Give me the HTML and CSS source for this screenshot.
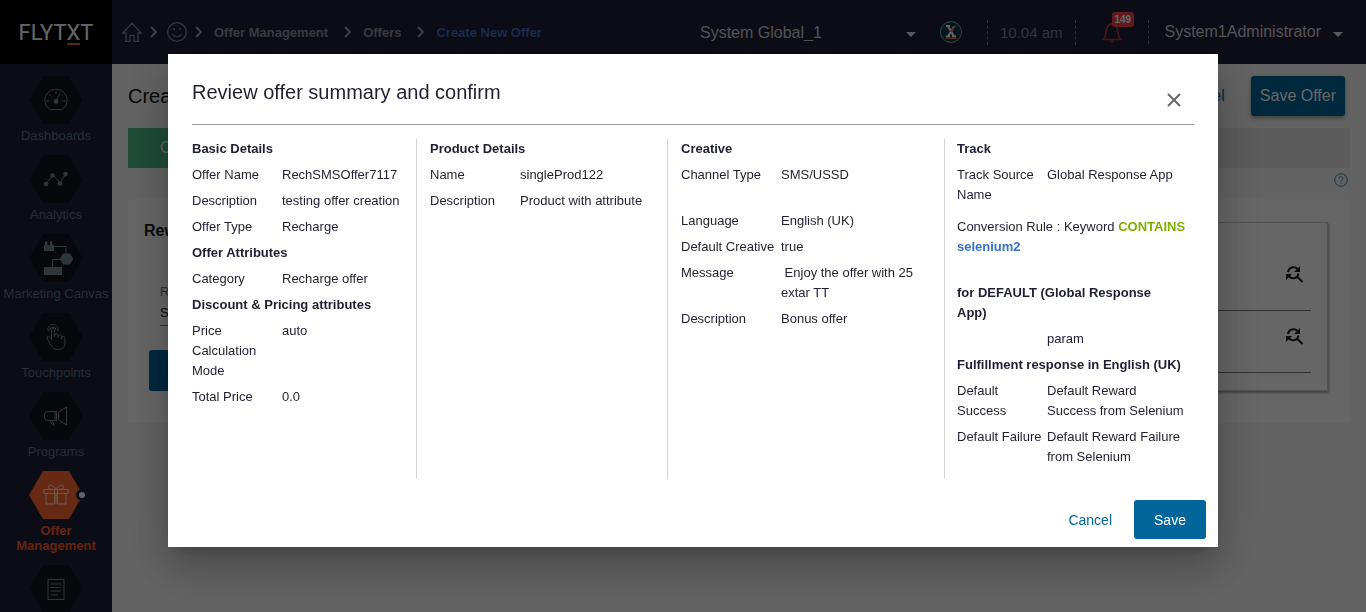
FILE: index.html
```html
<!DOCTYPE html>
<html lang="en">
<head>
<meta charset="utf-8">
<title>Create New Offer</title>
<link rel="stylesheet" href="styles.css">
</head>
<body>
<div class="app">
  <aside class="sidebar">
    <div class="logo"><span>FLYT<span class="logo-x">X</span>T</span></div>
    <nav class="menu">
      <a class="item" href="#">
        <span class="hex"><svg class="glyph" viewBox="0 0 26 26"><path d="M6.500 22.500A11.200 11.200 0 1 1 19.500 22.500Z"/><path d="M13 4v3M3.500 14h3M19.500 14h3M6.500 7.500l2 2M13.500 13l3.500-6.500M19.500 7.500l-1 1"/><circle class="solid" cx="13" cy="14.500" r="2.400"/></svg></span>
        <span class="label">Dashboards</span>
      </a>
      <a class="item" href="#">
        <span class="hex"><svg class="glyph" viewBox="0 0 26 26"><path d="M3 18l7-9 7 8 6-9.500"/><g class="solid"><circle cx="3" cy="18" r="2.300"/><circle cx="9.500" cy="9.500" r="2.300"/><circle cx="17" cy="17.500" r="2.300"/><circle cx="22.500" cy="8" r="2.300"/></g></svg></span>
        <span class="label">Analytics</span>
      </a>
      <a class="item" href="#">
        <span class="hex"><svg class="glyph wide" viewBox="0 0 36 36"><path d="M14 6.500h14v7M22 19.500M28 19.500H14.500v8"/><g class="solid"><path d="M6 5h10v6H6zM7 1.500h2.500v4H7zM12 1.500h2.500v4H12zM6 27h18v8H6zM25 13.500h7l3.200 5.500-3.200 5.500h-7L21.800 19z"/></g></svg></span>
        <span class="label">Marketing Canvas</span>
      </a>
      <a class="item" href="#">
        <span class="hex"><svg class="glyph" viewBox="0 0 26 26"><path d="M8.500 16V5.500a1.500 1.500 0 0 1 3 0V13M11.500 11.500a1.500 1.500 0 0 1 3.500 0V14M15 12.500a1.500 1.500 0 0 1 3.500 0V15M18.500 14a1.500 1.500 0 0 1 3.500 0v5c0 4-3 6.500-7 6.500-5 0-6.500-3-9-7.500l-2-4c-.5-2 1.500-2.500 3-.5l2 2.500"/><path d="M5.500 7.500a5 5 0 1 1 9 0M7 6a3 3 0 1 1 6 0"/></svg></span>
        <span class="label">Touchpoints</span>
      </a>
      <a class="item" href="#">
        <span class="hex"><svg class="glyph" viewBox="0 0 26 26"><path d="M12 8.500v9H4.500c-4 0-4-9 0-9zM12 8.500h1.500v9H12M15.500 9l8-5v18l-8-5zM7 17.500h2.500l1.500 5.500M7 17.500l2 4"/></svg></span>
        <span class="label">Programs</span>
      </a>
      <a class="item active" href="#">
        <span class="hex"><svg class="glyph" viewBox="0 0 26 26"><path d="M1 7.500h24v4H1zM3 11.500h9v10.500H3zM14 11.500h9v10.500h-9zM11.500 7.500v14.500M14.500 7.500v14.500M13 7.500C10 2 5 2 5.500 5.500c.3 2 3 2 7.500 2M13 7.500c3-5.500 8-5.500 7.500-2-.3 2-3 2-7.500 2"/></svg></span>
        <span class="dot"></span>
        <span class="label">Offer Management</span>
      </a>
      <a class="item" href="#" aria-label="Reports">
        <span class="hex"><svg class="glyph" viewBox="0 0 26 26"><path d="M5 3.500h16v20H5zM7.500 8h11M7.500 11.500h10M7.500 15h10M7.500 19h7"/></svg></span>
      </a>
    </nav>
  </aside>

  <div class="page">
    <header class="topbar">
      <nav class="crumbs" aria-label="Breadcrumb">
        <a href="#" aria-label="Home"><svg class="crumb-icon" viewBox="0 0 20 20"><path d="M1 11l9-10 9 10h-3v8.300h-4v-6H8v6H4V11z"/></svg></a>
        <svg class="chev" viewBox="0 0 7 12"><path d="M1 1l5 5-5 5"/></svg>
        <a href="#" aria-label="Customers" class="face"><svg class="crumb-icon" viewBox="0 0 20 20"><circle cx="10" cy="10" r="9.300"/><path d="M5.500 12c2 3.500 7 3.500 9 0"/><circle class="eye" cx="7" cy="7" r="1"/><circle class="eye" cx="13" cy="7" r="1"/></svg></a>
        <svg class="chev" viewBox="0 0 7 12"><path d="M1 1l5 5-5 5"/></svg>
        <a class="crumb" href="#">Offer Management</a>
        <svg class="chev" viewBox="0 0 7 12"><path d="M1 1l5 5-5 5"/></svg>
        <a class="crumb" href="#">Offers</a>
        <svg class="chev" viewBox="0 0 7 12"><path d="M1 1l5 5-5 5"/></svg>
        <a class="crumb current" href="#">Create New Offer</a>
      </nav>
      <div class="tools">
        <label class="picker"><select aria-label="Partner"><option>System Global_1</option></select>
          <svg class="caret" viewBox="0 0 10 5"><path d="M0 0h10L5 5z"/></svg></label>
        <svg class="badge-x" viewBox="0 0 22 22"><circle cx="11" cy="11" r="10.500"/><path class="stroke-w" d="M8 5l6 10.500M6 5h4M12 15.500h4"/><path class="stroke-w" d="M14 5.500L8 15.500M6 15.500h4"/><path class="stroke-o" d="M15.500 4.500L10.500 11M5.500 17.200h11"/></svg>
        <span class="time">10.04 am</span>
        <a class="bell" href="#" aria-label="Notifications"><svg viewBox="0 0 20 22"><path d="M1 18.500c2-2 2.500-3.500 3-7 .5-5 2-8.500 6-8.500s5.500 3.500 6 8.500c.5 3.500 1 5 3 7zM8.500 19.500a1.500 1.500 0 0 0 3 0"/></svg><span class="count">149</span></a>
        <button class="user" type="button">System1Administrator <svg class="caret" viewBox="0 0 10 5"><path d="M0 0h10L5 5z"/></svg></button>
      </div>
    </header>

    <main class="content">
      <div class="head">
        <h1>Create</h1>
        <a class="cancel-link" href="#">Cancel</a>
        <button class="save-offer" type="button">Save Offer</button>
      </div>
      <div class="steps"><a class="step" href="#">Configure</a></div>
      <div class="help"><svg viewBox="0 0 14 14"><circle cx="7" cy="7" r="6.300"/><path d="M5 5.500c0-2.500 4-2.500 4 0 0 1.500-2 1.500-2 3M7 9.500v1.200"/></svg></div>
      <section class="card">
        <div class="form">
          <h2>Rew</h2>
          <div class="field"><label for="reward">R</label><input id="reward" value="S"></div>
          <button class="add" type="button" aria-label="Add"></button>
        </div>
        <div class="results">
          <div class="line"><svg viewBox="0 0 18 18"><path d="M2 7a5.500 5.500 0 0 1 9.500-3M12.500 8.500a5.500 5.500 0 0 1-9.500 3M11.500 12l5 5"/><path class="fill" d="M14 1v6H8zM0 9h6L0 15z"/></svg></div>
          <div class="line"><svg viewBox="0 0 18 18"><path d="M2 7a5.500 5.500 0 0 1 9.500-3M12.500 8.500a5.500 5.500 0 0 1-9.500 3M11.500 12l5 5"/><path class="fill" d="M14 1v6H8zM0 9h6L0 15z"/></svg></div>
        </div>
      </section>
    </main>
  </div>
</div>

<div class="overlay">
  <div class="dialog" role="dialog" aria-modal="true" aria-labelledby="dialog-title">
    <div class="dialog-head">
      <h2 id="dialog-title">Review offer summary and confirm</h2>
      <button class="close" type="button" aria-label="Close"><svg viewBox="0 0 14 14"><path d="M1 1l12 12M13 1L1 13"/></svg></button>
    </div>
    <div class="summary">
      <section class="col">
        <h3>Basic Details</h3>
        <dl><dt>Offer Name</dt><dd>RechSMSOffer7117</dd></dl>
        <dl><dt>Description</dt><dd>testing offer creation</dd></dl>
        <dl><dt>Offer Type</dt><dd>Recharge</dd></dl>
        <h3>Offer Attributes</h3>
        <dl><dt>Category</dt><dd>Recharge offer</dd></dl>
        <h3>Discount &amp; Pricing attributes</h3>
        <dl><dt>Price Calculation Mode</dt><dd>auto</dd></dl>
        <dl><dt>Total Price</dt><dd>0.0</dd></dl>
      </section>
      <section class="col">
        <h3>Product Details</h3>
        <dl><dt>Name</dt><dd>singleProd122</dd></dl>
        <dl><dt>Description</dt><dd>Product with attribute</dd></dl>
      </section>
      <section class="col creative">
        <h3>Creative</h3>
        <dl class="group-end"><dt>Channel Type</dt><dd>SMS/USSD</dd></dl>
        <dl><dt>Language</dt><dd>English (UK)</dd></dl>
        <dl><dt>Default Creative</dt><dd>true</dd></dl>
        <dl><dt>Message</dt><dd>&nbsp;Enjoy the offer with 25 extar TT</dd></dl>
        <dl><dt>Description</dt><dd>Bonus offer</dd></dl>
      </section>
      <section class="col track">
        <h3>Track</h3>
        <dl><dt>Track Source Name</dt><dd>Global Response App</dd></dl>
        <p class="rule">Conversion Rule : Keyword <b class="op">CONTAINS</b> <b class="val">selenium2</b></p>
        <h3 class="source">for DEFAULT (Global Response App)</h3>
        <dl><dt></dt><dd>param</dd></dl>
        <h3>Fulfillment response in English (UK)</h3>
        <dl><dt>Default Success</dt><dd>Default Reward Success from Selenium</dd></dl>
        <dl><dt>Default Failure</dt><dd>Default Reward Failure from Selenium</dd></dl>
      </section>
    </div>
    <div class="actions">
      <button class="btn-text" type="button">Cancel</button>
      <button class="btn-primary" type="button">Save</button>
    </div>
  </div>
</div>
</body>
</html>
```
FILE: styles.css
```css
* { box-sizing: border-box; }
body {
  margin: 0;
  font-family: "Liberation Sans", Arial, sans-serif;
  font-size: 13px;
  color: #1f1f33;
  background: #f7f7f7;
}
h1, h2, h3, p, dl, dd { margin: 0; }
a { color: inherit; text-decoration: none; }
button, input, select { font: inherit; color: inherit; border: 0; background: none; padding: 0; }
svg { display: block; fill: none; flex: none; }

.app { display: flex; height: 100vh; overflow: hidden; }

/* Sidebar */
.sidebar { width: 112px; flex: none; background: #1f2038; }
.logo {
  height: 64px;
  display: flex;
  align-items: center;
  justify-content: center;
  background: #000;
  color: #fff;
  font-family: Roboto, sans-serif;
  font-size: 22px;
}
.logo-x { display: inline-block; line-height: 20px; border-bottom: 2px solid #e0682c; }
.menu { display: flex; flex-direction: column; gap: 12px; padding-top: 12px; }
.item {
  position: relative;
  display: flex;
  flex-direction: column;
  align-items: center;
  gap: 4px;
  color: #5f6e80;
  line-height: 15px;
  text-align: center;
}
.hex {
  display: flex;
  align-items: center;
  justify-content: center;
  width: 54px;
  height: 48px;
  background: #13161f;
  clip-path: polygon(26% 0, 74% 0, 100% 50%, 74% 100%, 26% 100%, 0 50%);
}
.label { padding: 0 4px; white-space: nowrap; }
.glyph { width: 26px; height: 26px; stroke: #70888f; stroke-width: 1; }
.glyph.wide { width: 36px; height: 36px; }
.solid { fill: #70888f; stroke: none; }
.active { color: #fa5a26; font-weight: bold; }
.active .hex { background: #ff6a33; }
.active .glyph { stroke: #ffe0d4; }
.active .label { white-space: normal; }
.dot {
  position: absolute;
  left: 76px;
  top: 18px;
  width: 12px;
  height: 12px;
  border: 3px solid #1f2038;
  border-radius: 50%;
  background: #fff;
}

/* Top bar */
.page { flex: 1; min-width: 0; }
.topbar {
  display: flex;
  align-items: center;
  justify-content: space-between;
  height: 64px;
  padding: 0 23px 0 10px;
  background: #1f2038;
}
.crumbs { display: flex; align-items: center; gap: 8px; color: #93939b; font-weight: bold; }
.crumb-icon { width: 20px; height: 20px; stroke: #85858f; stroke-width: 1.3; }
.face { margin-left: 2px; }
.eye { fill: #85858f; stroke: none; }
.chev { width: 7px; height: 12px; stroke: #a0a0a6; stroke-width: 2; }
.crumb { margin: 0 8px 0 4px; }
.current { color: #3c6fbf; margin-right: 0; }
.tools { display: flex; align-items: center; color: #d0d0d4; font-size: 16px; }
.picker { position: relative; display: flex; align-items: center; width: 216px; margin-right: 24px; }
.picker select { appearance: none; width: 100%; outline: 0; }
.picker .caret { position: absolute; right: 0; top: 8px; }
.caret { width: 10px; height: 5px; fill: #e0e0e0; }
.badge-x { width: 22px; height: 22px; margin-right: 25px; }
.badge-x circle { fill: #0b3a4a; stroke: #8fa3b0; }
.badge-x .stroke-w { stroke: #fff; stroke-width: 2; }
.badge-x .stroke-o { stroke: #e0653a; stroke-width: 1.4; }
.time {
  padding: 4px 12px;
  border: dashed #777783;
  border-width: 0 1px;
  font-size: 15px;
  color: #85858c;
}
.bell {
  position: relative;
  width: 73px;
  padding: 1px 26px;
  border-right: 1px dashed #777783;
}
.bell svg { width: 20px; height: 22px; stroke: #d4323a; stroke-width: 1.4; }
.count {
  position: absolute;
  left: 36px;
  top: -8px;
  padding: 0 3px;
  border-radius: 3px;
  background: #f2404a;
  color: #fff;
  font-size: 10px;
  font-weight: bold;
  line-height: 15px;
}
.user { display: flex; align-items: center; gap: 12px; margin-left: 16px; }
.user .caret { margin-top: 4px; }

/* Page behind the dialog */
.content { padding: 0 16px; }
.head { display: flex; align-items: center; height: 64px; padding-right: 5px; }
.head h1 { flex: 1; font-size: 20px; font-weight: normal; color: #111; }
.cancel-link { color: #00669b; font-size: 16px; margin-right: 26px; }
.save-offer {
  padding: 0 9px;
  height: 40px;
  border-radius: 3px;
  background: #00669b;
  color: #fff;
  font-size: 16px;
  box-shadow: 0 2px 4px rgba(0, 0, 0, .4);
}
.steps { display: flex; height: 40px; background: #e6e6e6; }
.step {
  display: flex;
  align-items: center;
  width: 140px;
  padding-left: 32px;
  background: #50bd8c;
  color: #e6fff2;
  font-size: 16px;
}
.help { display: flex; justify-content: flex-end; height: 30px; padding: 5px 2px 0; }
.help svg { width: 14px; height: 14px; stroke: #2a86b8; }
.card { display: flex; justify-content: space-between; padding: 24px 22px 32px 16px; background: #fff; }
.form { display: flex; flex-direction: column; width: 300px; }
.form h2 { font-size: 16px; line-height: 18px; color: #1a1a1a; }
.field { display: flex; flex-direction: column; margin: 44px 16px 24px; }
.field label { line-height: 16px; color: #777; }
.field input { height: 26px; border-bottom: 1px solid #777; border-radius: 0; color: #1a1a1a; }
.add { height: 41px; width: 90px; margin-left: 5px; border-radius: 3px; background: #00669b; color: #fff; }
.results {
  width: 720px;
  padding: 26px 16px 17px;
  border: 1px solid #ccc;
  box-shadow: 1px 2px 2px rgba(0, 0, 0, .35);
}
.line {
  display: flex;
  align-items: center;
  justify-content: flex-end;
  height: 62px;
  padding-right: 7px;
  border-bottom: 1px solid #777;
}
.line svg { width: 18px; height: 18px; stroke: #222; stroke-width: 2; margin-bottom: 12px; }
.line .fill { fill: #222; stroke: none; }

/* Dialog */
.overlay {
  position: fixed;
  inset: 0;
  display: flex;
  justify-content: center;
  align-items: flex-start;
  padding: 54px 0 0 20px;
  background: rgba(0, 0, 0, .6);
}
.dialog {
  width: 1050px;
  max-width: 100%;
  background: #fff;
  box-shadow: 0 11px 15px -7px rgba(0, 0, 0, .2), 0 24px 38px 3px rgba(0, 0, 0, .14), 0 9px 46px 8px rgba(0, 0, 0, .12);
}
.dialog-head {
  display: flex;
  justify-content: space-between;
  align-items: flex-start;
  margin: 0 24px;
  padding: 26px 8px 12px 0;
  border-bottom: 1px solid #999;
}
.dialog-head h2 { font-size: 20px; line-height: 24px; font-weight: normal; }
.close { display: flex; align-items: center; justify-content: center; width: 24px; height: 24px; margin-top: 8px; }
.close svg { width: 14px; height: 14px; stroke: #666; stroke-width: 2; }
.summary {
  display: grid;
  grid-template-columns: 225fr 251fr 277fr 249fr;
  min-height: 340px;
  margin: 14px 24px 0;
  line-height: 20px;
}
.col { display: flex; flex-direction: column; gap: 6px; padding-left: 13px; border-right: 1px solid #d4d4d8; }
.col:first-child { padding-left: 0; }
.col:last-child { border-right: 0; padding-left: 12px; }
.col h3 { font-size: 13px; }
.col dl { display: grid; grid-template-columns: 90px 1fr; }
.creative dl { grid-template-columns: 100px 1fr; padding-right: 12px; }
.col .group-end { margin-bottom: 20px; }
.track { padding-right: 2px; }
.track dl { padding-right: 5px; }
.source { padding-right: 16px; }
.rule { margin: 6px 0 20px; }
.op { color: #7fae00; }
.val { color: #3472cc; }
.actions { display: flex; justify-content: flex-end; align-items: center; gap: 22px; padding: 21px 12px 8px; font-size: 14px; }
.btn-text { color: #00669b; }
.btn-primary { width: 72px; height: 39px; border-radius: 3px; background: #00669b; color: #fff; }
```
